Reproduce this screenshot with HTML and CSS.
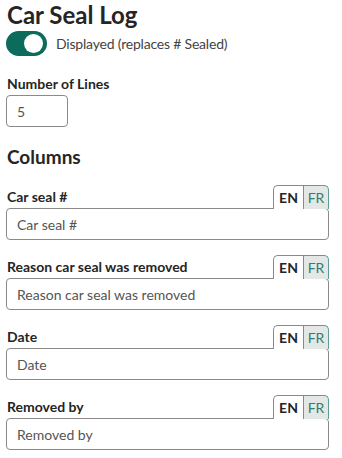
FILE: index.html
```html
<!DOCTYPE html>
<html lang="en">
<head>
  <meta charset="UTF-8">
  <title>Car Seal Log</title>
  <link rel="stylesheet" href="styles.css">
</head>
<body>

  <div class="panel">
    <h1 class="title">Car Seal Log</h1>

    <label class="toggle-row">
      <span class="switch on"><span class="knob"></span></span>
      <span class="toggle-text">Displayed (replaces # Sealed)</span>
    </label>

    <div class="field">
      <div class="field-label">Number of Lines</div>
      <input class="box small" type="text" value="5">
    </div>

    <h2 class="section">Columns</h2>

    <div class="col">
      <div class="col-head">
        <span class="field-label">Car seal #</span>
        <div class="tabs"><span class="tab en">EN</span><span class="tab fr">FR</span></div>
      </div>
      <input class="box wide" type="text" value="Car seal #">
    </div>

    <div class="col">
      <div class="col-head">
        <span class="field-label">Reason car seal was removed</span>
        <div class="tabs"><span class="tab en">EN</span><span class="tab fr">FR</span></div>
      </div>
      <input class="box wide" type="text" value="Reason car seal was removed">
    </div>

    <div class="col">
      <div class="col-head">
        <span class="field-label">Date</span>
        <div class="tabs"><span class="tab en">EN</span><span class="tab fr">FR</span></div>
      </div>
      <input class="box wide" type="text" value="Date">
    </div>

    <div class="col">
      <div class="col-head">
        <span class="field-label">Removed by</span>
        <div class="tabs"><span class="tab en">EN</span><span class="tab fr">FR</span></div>
      </div>
      <input class="box wide" type="text" value="Removed by">
    </div>
  </div>

</body>
</html>
```
FILE: styles.css
```css
body {
  margin: 0;
  background: #fff;
  color: #252525;
  font-family: Lato, 'Open Sans', sans-serif;
}

.panel {
  padding: 0 13px 0 6px;
}

.title {
  margin: 0;
  padding-left: 1px;
  font-size: 24px;
  line-height: 30px;
  font-weight: 700;
}

.toggle-row {
  display: flex;
  align-items: center;
  gap: 9px;
  margin-top: 1px;
}

.switch {
  position: relative;
  width: 41px;
  height: 25px;
  border-radius: 13px;
  background: #0d6b5c;
  flex-shrink: 0;
}

.switch .knob {
  position: absolute;
  top: 3px;
  right: 4px;
  width: 19px;
  height: 19px;
  border-radius: 50%;
  background: #fff;
}

.toggle-text {
  font-size: 14px;
  letter-spacing: -0.2px;
  color: #444;
}

.field {
  margin-top: 19px;
}

.field-label {
  display: block;
  padding-left: 1px;
  font-size: 14px;
  font-weight: 700;
  color: #252525;
}

.box {
  display: block;
  box-sizing: border-box;
  height: 32px;
  border: 1px solid #8a8a8a;
  border-radius: 4px;
  padding: 0 10px;
  font-family: inherit;
  font-size: 14px;
  color: #555;
  background: #fff;
}

.small {
  width: 62px;
  margin-top: 3px;
}

.wide {
  width: 100%;
}

.section {
  margin: 17px 0 0;
  padding-left: 1px;
  font-size: 19px;
  line-height: 26px;
  font-weight: 700;
}

.col {
  margin-top: 15px;
}

.section + .col {
  margin-top: 15px;
}

.col-head {
  display: flex;
  justify-content: space-between;
  align-items: flex-end;
  margin-bottom: -1px;
}

.col-head .field-label {
  padding-bottom: 4px;
}

.tabs {
  display: flex;
  position: relative;
  z-index: 1;
}

.tab {
  box-sizing: border-box;
  height: 24px;
  font-size: 14px;
  line-height: 24px;
}

.tab.en {
  width: 30px;
  text-align: center;
  font-weight: 700;
  background: #fff;
  border: 1px solid #8a8a8a;
  border-bottom: none;
  border-right: none;
  border-radius: 5px 0 0 0;
}

.tab.fr {
  width: 26px;
  text-align: center;
  color: #2e7e72;
  background: #e3e7e6;
  border: 1px solid #5d9d93;
  border-bottom: none;
  border-radius: 0 5px 0 0;
}
```
